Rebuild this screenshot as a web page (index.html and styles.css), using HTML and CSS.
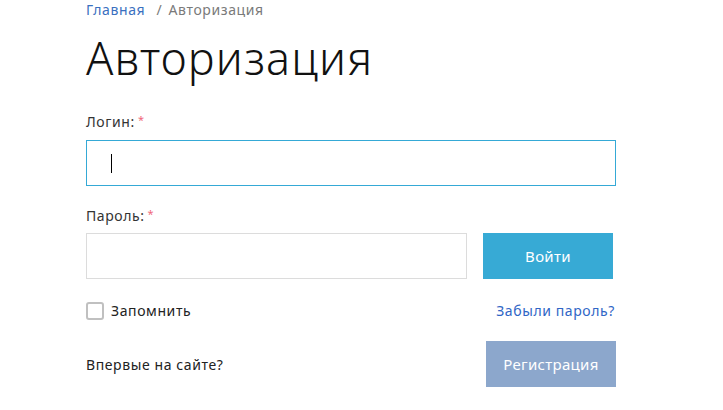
FILE: index.html
```html
<!DOCTYPE html>
<html lang="ru">
<head>
    <meta charset="utf-8">
    <meta name="viewport" content="width=device-width, initial-scale=1.0">
    <title>Авторизация</title>
    <link rel="stylesheet" href="styles.css">
</head>
<body>
    <div class="page">
        <div class="breadcrumbs">
            <a href="#" class="crumb-link">Главная</a>
            <span class="crumb-sep">/</span>
            <span class="crumb-current">Авторизация</span>
        </div>
        <h1>Авторизация</h1>
        <form class="auth-form">
            <label class="field-label" for="login">Логин:<span class="req">*</span></label>
            <div class="field-row">
                <div class="fake-input focused"><span class="caret"></span></div>
            </div>
            <label class="field-label pass-label" for="password">Пароль:<span class="req">*</span></label>
            <div class="field-row">
                <div class="fake-input short"></div>
                <button type="button" class="btn btn-login">Войти</button>
            </div>
            <div class="options-row">
                <label class="remember"><span class="checkbox"></span>Запомнить</label>
                <a href="#" class="forgot">Забыли пароль?</a>
            </div>
            <div class="register-row">
                <span class="first-time">Впервые на сайте?</span>
                <button type="button" class="btn btn-register">Регистрация</button>
            </div>
        </form>
    </div>
</body>
</html>
```
FILE: styles.css
```css
body {
    font-family: "Noto Sans", "Open Sans", sans-serif;
    background-color: #fff;
    color: #222;
    margin: 0;
    letter-spacing: 0.6px;
}
.page {
    width: 530px;
    padding: 0 0 0 86px;
}
.breadcrumbs {
    font-size: 14px;
    line-height: 20px;
    color: #7a7a7a;
}
.crumb-link {
    color: #3a6fc0;
    text-decoration: none;
}
.crumb-sep {
    margin: 0 2px 0 7px;
}
h1 {
    font-size: 45px;
    font-weight: 300;
    line-height: 56px;
    margin: 10px 0 26px;
    color: #111;
    letter-spacing: 1.2px;
}
.field-label {
    display: block;
    height: 20px;
    font-size: 14px;
    line-height: 20px;
    color: #333;
    margin-bottom: 8px;
}
.field-label.pass-label {
    margin-bottom: 7px;
}
.req {
    color: #f0677a;
    font-size: 11px;
    line-height: 0;
    vertical-align: 3px;
    margin-left: 3px;
}
.field-row {
    display: flex;
    justify-content: space-between;
    margin-bottom: 20px;
}
.fake-input {
    height: 44px;
    width: 528px;
    border: 1px solid #dcdcdc;
    display: flex;
    align-items: center;
    padding-left: 24px;
    box-sizing: content-box;
}
.fake-input.focused {
    border-color: #35a9d6;
    width: 504px;
}
.fake-input.short {
    width: 355px;
}
.caret {
    display: block;
    width: 1px;
    height: 19px;
    background: #000;
}
.btn {
    font-family: inherit;
    letter-spacing: 0.3px;
    border: none;
    color: #fff;
    font-size: 15px;
    width: 130px;
    height: 46px;
    cursor: pointer;
}
.btn-login {
    background-color: #37aad5;
    margin-right: 3px;
}
.btn-register {
    background-color: #8ca7cc;
}
.options-row {
    display: flex;
    justify-content: space-between;
    align-items: center;
    margin-top: 22px;
    font-size: 14px;
}
.remember {
    display: flex;
    align-items: center;
    color: #222;
}
.checkbox {
    width: 14px;
    height: 14px;
    border: 2px solid #c0c0c0;
    border-radius: 3px;
    margin-right: 7px;
}
.forgot {
    color: #3066c6;
    text-decoration: none;
    margin-right: 1px;
}
.register-row {
    display: flex;
    justify-content: space-between;
    align-items: center;
    margin-top: 21px;
    font-size: 14px;
}
```
